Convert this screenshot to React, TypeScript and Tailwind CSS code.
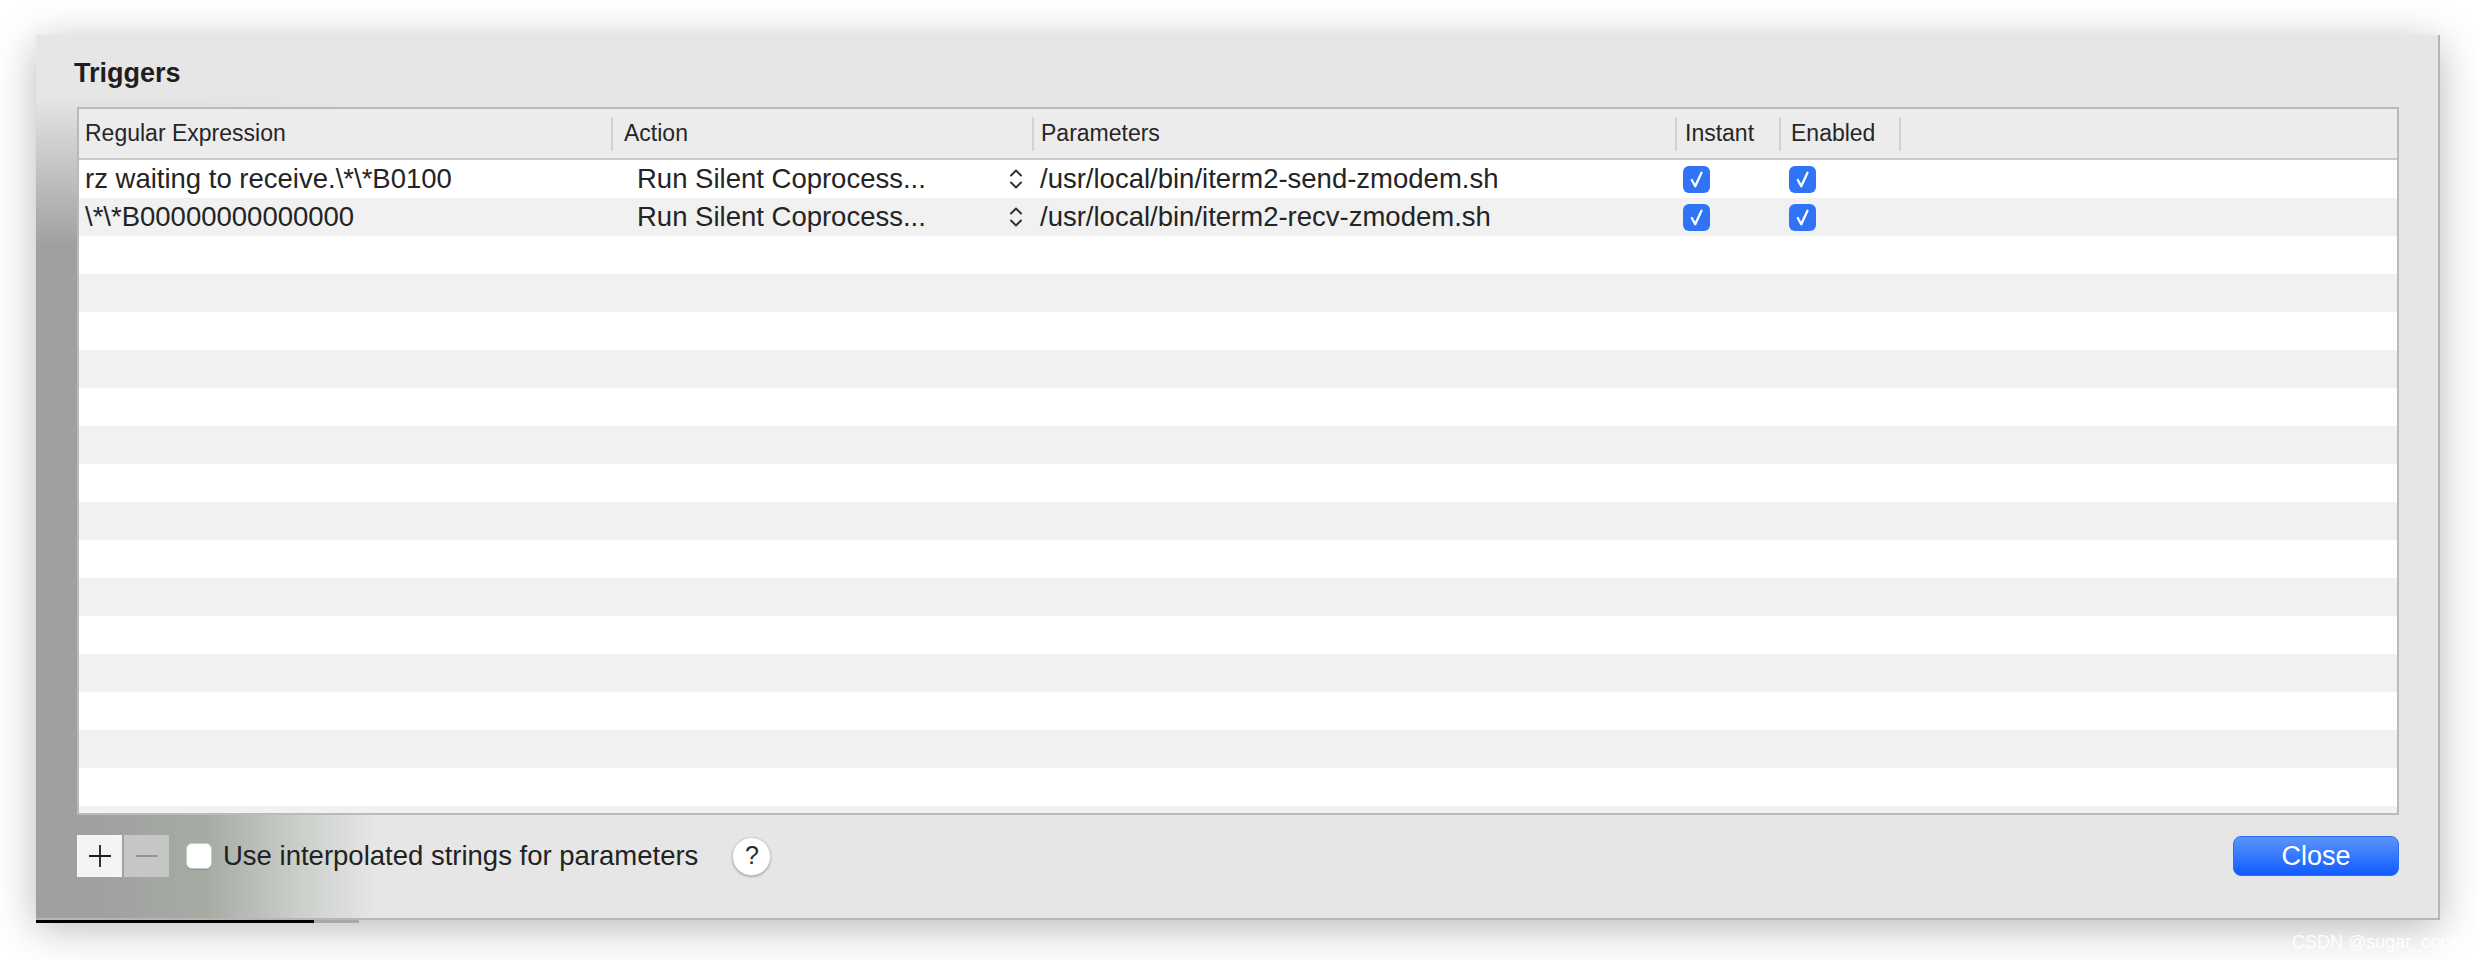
import React from 'react';

interface Trigger {
  regex: string;
  action: string;
  params: string;
  instant: boolean;
  enabled: boolean;
}

const TRIGGERS: Trigger[] = [
  {
    regex: 'rz waiting to receive.\\*\\*B0100',
    action: 'Run Silent Coprocess...',
    params: '/usr/local/bin/iterm2-send-zmodem.sh',
    instant: true,
    enabled: true,
  },
  {
    regex: '\\*\\*B00000000000000',
    action: 'Run Silent Coprocess...',
    params: '/usr/local/bin/iterm2-recv-zmodem.sh',
    instant: true,
    enabled: true,
  },
];

const ROW_COUNT = 18;

const Sep = () => <div className="h-[34px] w-[2px] bg-[#d3d3d3]" />;

const Check = () => (
  <div className="flex h-[27px] w-[27px] items-center justify-center rounded-[6px] bg-[#2f73f6]">
    <svg width="27" height="27" viewBox="0 0 26 26" fill="none">
      <path d="M8.5 13.5 L11.8 19.5 L17.8 6.5" stroke="white" strokeWidth="2.2" strokeLinecap="round" strokeLinejoin="round" />
    </svg>
  </div>
);

const Stepper = () => (
  <svg width="14" height="24" viewBox="0 0 14 24" fill="none">
    <path d="M2 8.5 L7 3.5 L12 8.5" stroke="#333" strokeWidth="2" strokeLinecap="round" strokeLinejoin="round" />
    <path d="M2 15.5 L7 20.5 L12 15.5" stroke="#333" strokeWidth="2" strokeLinecap="round" strokeLinejoin="round" />
  </svg>
);

const App: React.FC = () => {
  const rows = Array.from({ length: ROW_COUNT }, (_, i) => TRIGGERS[i] ?? null);

  return (
    <div className="relative h-[960px] w-[2478px] overflow-hidden bg-white pl-[36px] pt-[35px] font-['Liberation_Sans',Arial,sans-serif] text-[#242424]">
      <div className="flex h-[885px] w-[2404px] flex-col border-r-2 border-b-2 border-[#b6b6b6] bg-[#e6e6e6] bg-[image:linear-gradient(to_bottom,#e6e6e6_0px,#e6e6e6_60px,rgba(230,230,230,0)_210px),linear-gradient(to_right,#a0a0a0_0px,#a0a0a0_60px,#a6aca4_170px,#c9cec8_260px,#e6e6e6_340px)] shadow-[0_8px_40px_rgba(0,0,0,0.28)]">
        <div className="flex h-[72px] shrink-0 items-center pl-[38px] pt-[4px] text-[27px] font-bold text-[#1e1e1e]">
          Triggers
        </div>

        <div className="ml-[41px] flex h-[708px] w-[2322px] shrink-0 flex-col overflow-hidden border-2 border-[#bababa] bg-white">
          <div className="flex h-[51px] shrink-0 border-b-2 border-[#c9c9c9] bg-[#ececec] text-[23px] text-[#262626]">
            <div className="flex w-[534px] items-center justify-between pl-[6px]"><span>Regular Expression</span><Sep /></div>
            <div className="flex w-[421px] items-center justify-between pl-[11px]"><span>Action</span><Sep /></div>
            <div className="flex w-[643px] items-center justify-between pl-[7px]"><span>Parameters</span><Sep /></div>
            <div className="flex w-[104px] items-center justify-between pl-[8px]"><span>Instant</span><Sep /></div>
            <div className="flex w-[120px] items-center justify-between pl-[10px]"><span>Enabled</span><Sep /></div>
          </div>

          {rows.map((t, i) => (
            <div
              key={i}
              className={`flex h-[38px] shrink-0 items-center text-[27.5px] leading-[38px] ${i % 2 ? 'bg-[#f0f1f0]' : 'bg-white'}`}
            >
              {t && (
                <>
                  <div className="w-[534px] truncate pl-[6px]">{t.regex}</div>
                  <div className="flex w-[421px] items-center justify-between pl-[24px] pr-[11px]">
                    <span>{t.action}</span>
                    <Stepper />
                  </div>
                  <div className="w-[643px] pl-[6px]">{t.params}</div>
                  <div className="w-[104px] pl-[6px]">{t.instant && <Check />}</div>
                  <div className="w-[120px] pl-[8px]">{t.enabled && <Check />}</div>
                </>
              )}
            </div>
          ))}
        </div>

        <div className="ml-[41px] mt-[20px] flex h-[42px] w-[2322px] items-center">
          <div className="flex h-[42px] w-[45px] items-center justify-center bg-[#f4f4f4]">
            <svg width="22" height="22" viewBox="0 0 22 22" fill="none">
              <path d="M11 0 V22 M0 11 H22" stroke="#1e1e1e" strokeWidth="1.8" />
            </svg>
          </div>
          <div className="ml-[2px] flex h-[42px] w-[45px] items-center justify-center bg-[#c5c7c4]">
            <svg width="22" height="22" viewBox="0 0 22 22" fill="none">
              <path d="M0 11 H22" stroke="#8f918e" strokeWidth="1.8" />
            </svg>
          </div>
          <div className="ml-[17px] h-[26px] w-[26px] rounded-[6px] border border-[#cacaca] bg-white shadow-[0_1px_1px_rgba(0,0,0,0.15)]" />
          <span className="ml-[11px] text-[27.5px] text-[#222]">Use interpolated strings for parameters</span>
          <div className="ml-[34px] flex h-[39px] w-[39px] items-center justify-center rounded-full border border-[#cfcfcf] bg-white text-[25px] text-[#2a2a2a] shadow-[0_1px_2px_rgba(0,0,0,0.3)]">
            ?
          </div>
          <div className="flex-1" />
          <button className="flex h-[40px] w-[166px] items-center justify-center rounded-[8px] border border-[#2c6cf2] bg-[linear-gradient(to_bottom,#5c94fb,#0f5cff)] text-[27px] text-white">
            Close
          </button>
        </div>
      </div>

      <div className="flex">
        <div className="h-[3px] w-[278px] bg-black" />
        <div className="h-[3px] w-[45px] bg-[#a9a9a9]" />
      </div>

      <div className="absolute left-[2292px] top-[929px] whitespace-nowrap text-[18px] text-white/90">CSDN @sugar_cookie</div>
    </div>
  );
};

export default App;
